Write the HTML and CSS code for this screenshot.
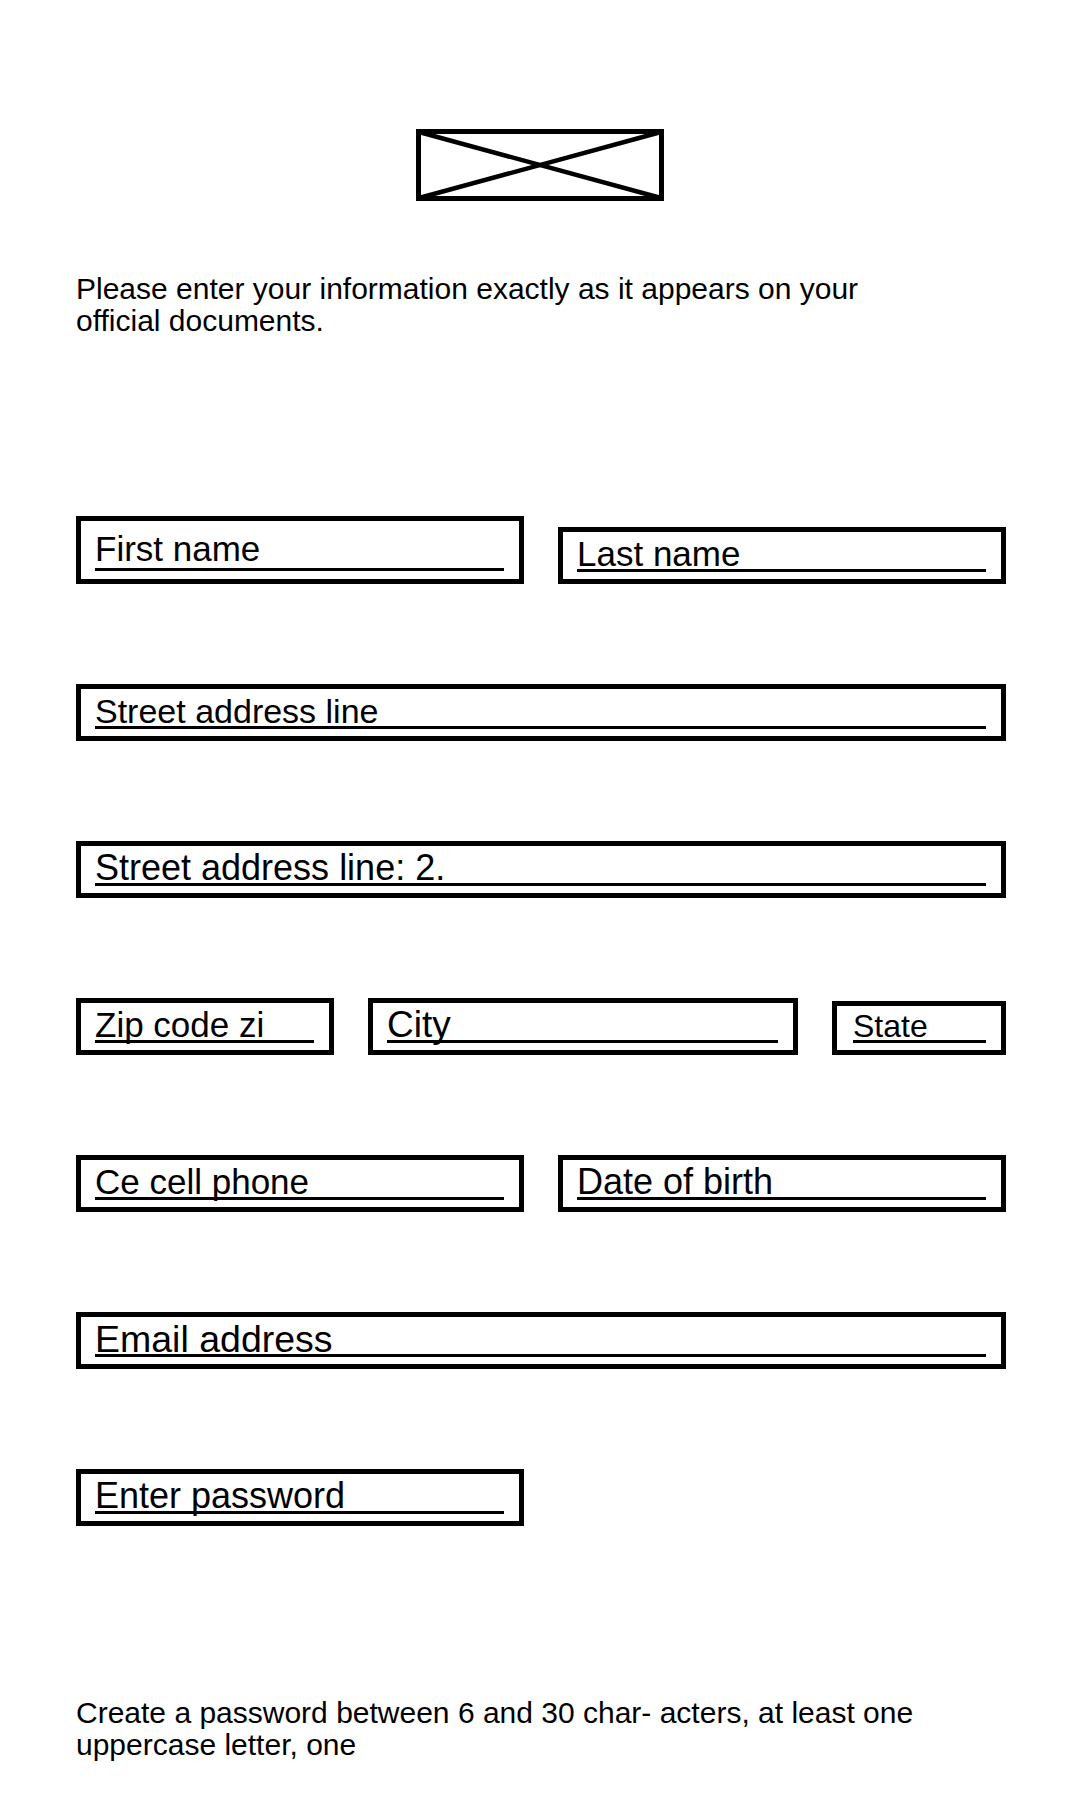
FILE: index.html
```html
<!DOCTYPE html>
<html lang="en">
<head>
  <meta charset="UTF-8" />
  <meta name="viewport" content="width=device-width, initial-scale=1.0" />
  <title>Registration</title>
  <link rel="stylesheet" href="styles.css">
</head>
<body>
  <div class="page">
    <div class="logo">
      <svg width="248" height="72" viewBox="0 0 248 72">
        <rect x="2.5" y="2.5" width="243" height="67" fill="none" stroke="#000" stroke-width="5" />
        <line x1="3" y1="3" x2="245" y2="69" stroke="#000" stroke-width="4.5" />
        <line x1="3" y1="69" x2="245" y2="3" stroke="#000" stroke-width="4.5" />
      </svg>
    </div>

    <p class="intro">Please enter your information exactly as it appears on your official documents.</p>

    <div class="form">
      <div class="row row-half">
        <div class="field field-tall"><div class="field-line">First name</div></div>
        <div class="field"><div class="field-line">Last name</div></div>
      </div>

      <div class="row">
        <div class="field"><div class="field-line size-34">Street address line</div></div>
      </div>

      <div class="row">
        <div class="field"><div class="field-line size-36">Street address line: 2.</div></div>
      </div>

      <div class="row row-place">
        <div class="field"><div class="field-line">Zip code zi</div></div>
        <div class="field"><div class="field-line size-37">City</div></div>
        <div class="field field-short"><div class="field-line size-32">State</div></div>
      </div>

      <div class="row row-half">
        <div class="field"><div class="field-line">Ce cell phone</div></div>
        <div class="field"><div class="field-line size-36">Date of birth</div></div>
      </div>

      <div class="row">
        <div class="field"><div class="field-line size-38">Email address</div></div>
      </div>

      <div class="row row-half">
        <div class="field"><div class="field-line size-36">Enter password</div></div>
      </div>
    </div>

    <p class="hint">Create a password between 6 and 30 char- acters, at least one uppercase letter, one</p>
  </div>
</body>
</html>
```

FILE: styles.css
```css
body {
  font-family: "Liberation Sans", Arial, sans-serif;
  background: #fff;
  color: #000;
  margin: 0;
  padding: 0;
}
.page {
  width: 930px;
  padding: 129px 0 0 76px;
}
.logo {
  display: flex;
  justify-content: center;
  padding-right: 2px;
}
.logo svg {
  display: block;
}
.intro, .hint {
  width: 860px;
  font-size: 30px;
  line-height: 32px;
  margin: 0;
}
.intro {
  margin-top: 72px;
}
.form {
  display: flex;
  flex-direction: column;
  gap: 100px;
  margin-top: 179px;
}
.row {
  display: grid;
  grid-template-columns: 1fr;
  align-items: end;
}
.row-half {
  grid-template-columns: 1fr 1fr;
  column-gap: 34px;
}
.row-place {
  grid-template-columns: 258px 430px 174px;
  column-gap: 34px;
}
.field {
  border: 5px solid #000;
  padding: 7px 15px 7px 14px;
}
.field-tall {
  padding-top: 9px;
  padding-bottom: 8px;
}
.field-short {
  padding: 6px 15px 7px 16px;
}
.field-line {
  font-size: 35px;
  line-height: 30px;
  border-bottom: 3px solid #000;
  white-space: nowrap;
}
.field-tall .field-line {
  line-height: 38px;
}
.size-32 {
  font-size: 32px;
  line-height: 28px;
}
.size-34 {
  font-size: 34px;
}
.size-36 {
  font-size: 36px;
}
.size-37 {
  font-size: 37px;
}
.size-38 {
  font-size: 37.5px;
}
.hint {
  margin-top: 171px;
}
```
